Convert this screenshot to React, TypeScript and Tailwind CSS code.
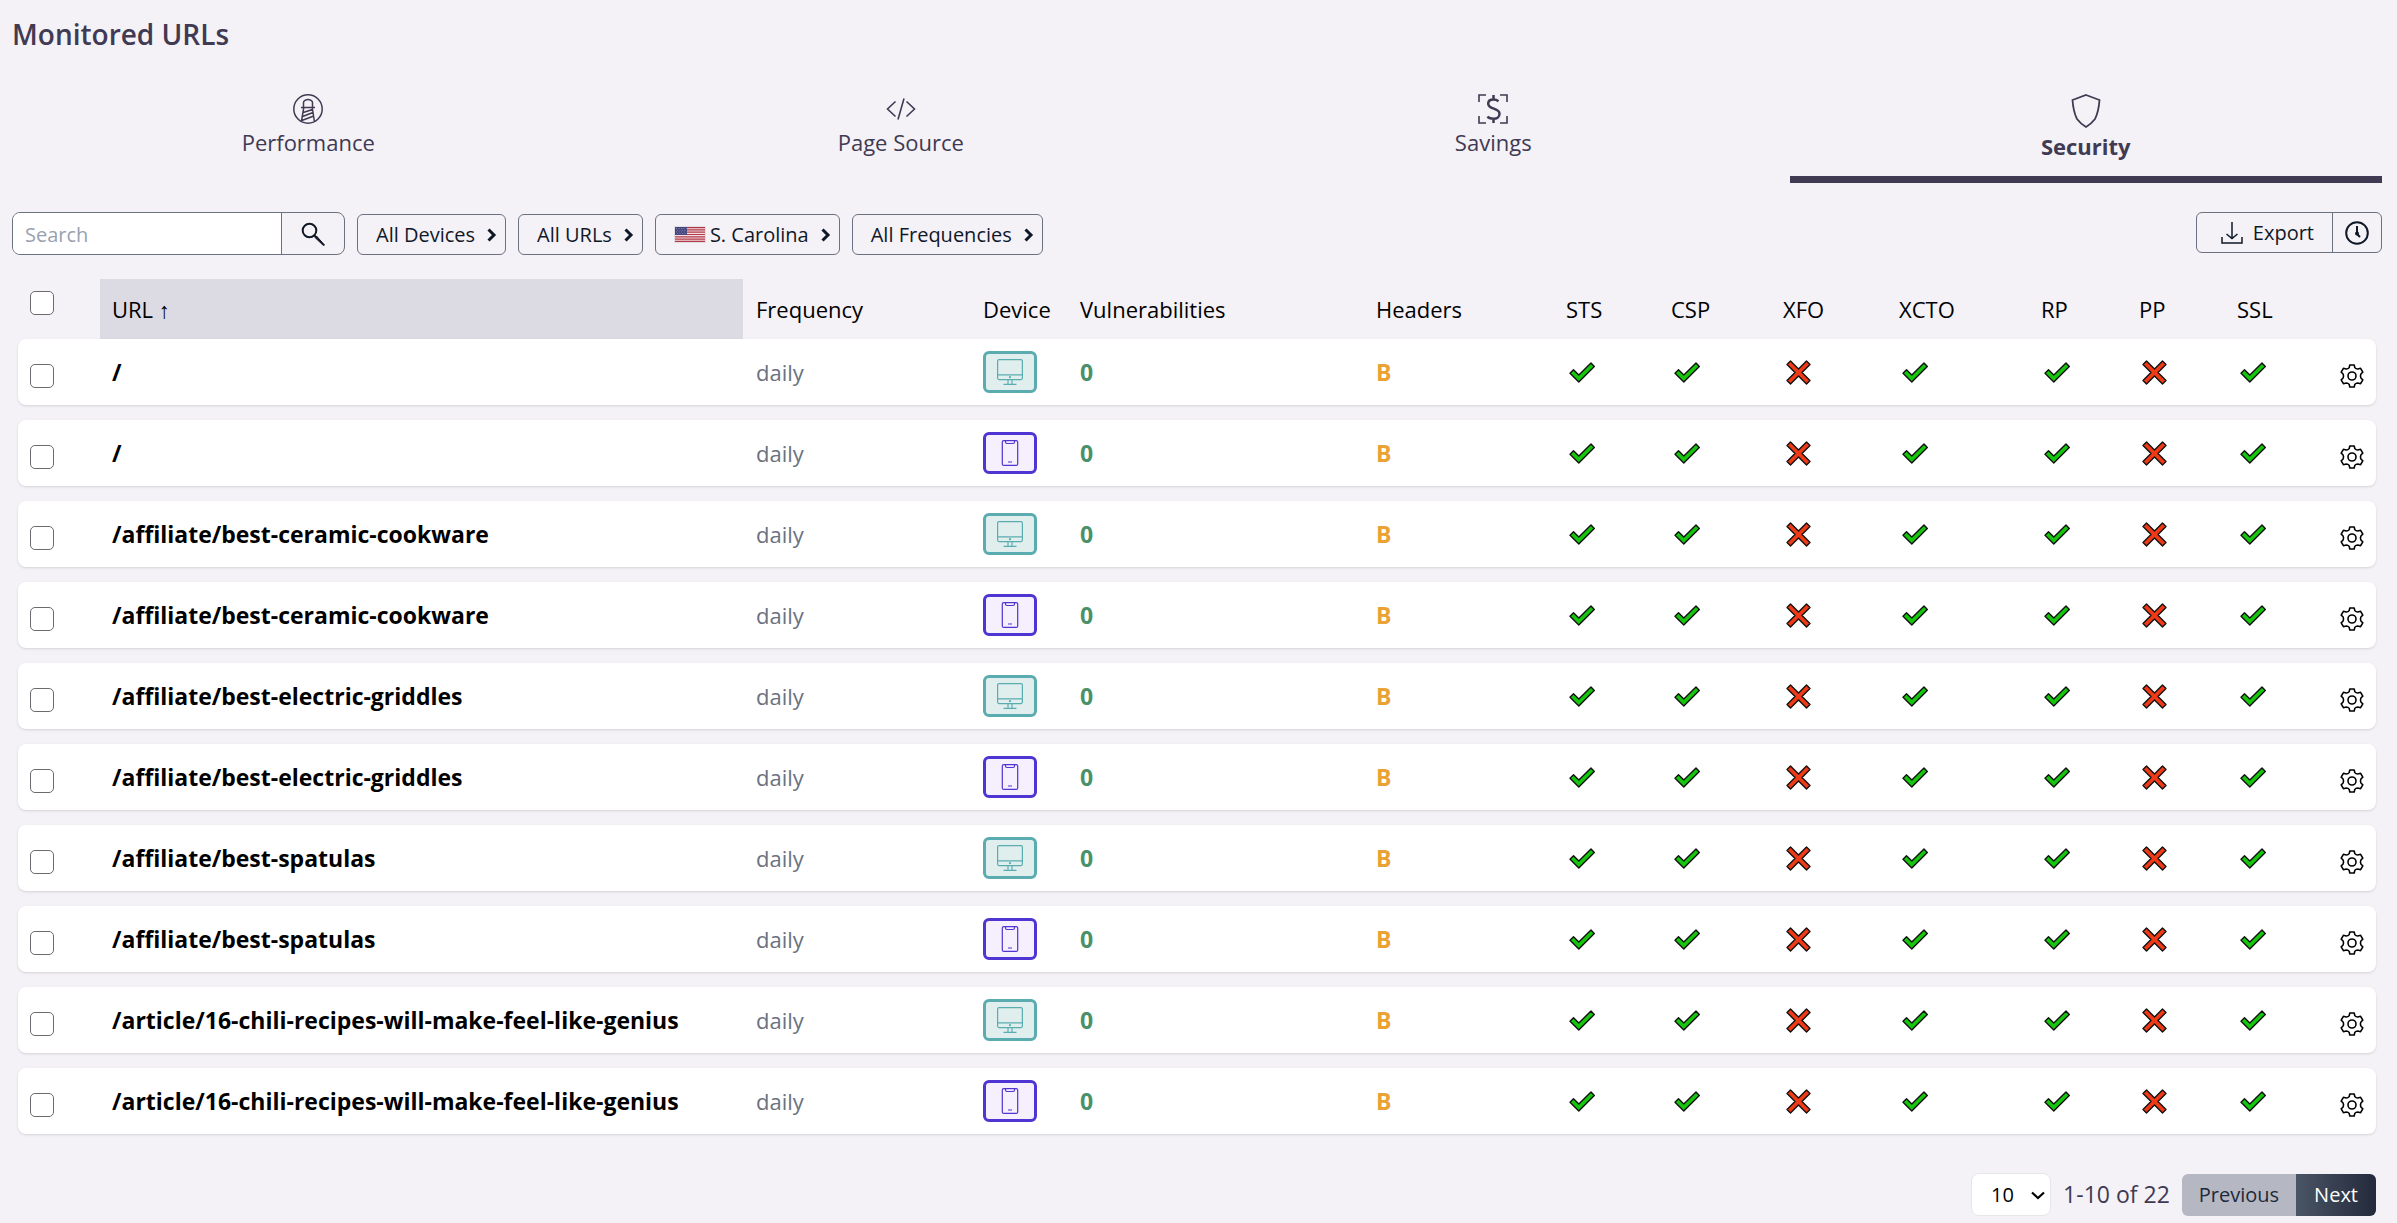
import { ReactNode } from "react";

const rows = [
  { url: "/", device: "desktop" },
  { url: "/", device: "mobile" },
  { url: "/affiliate/best-ceramic-cookware", device: "desktop" },
  { url: "/affiliate/best-ceramic-cookware", device: "mobile" },
  { url: "/affiliate/best-electric-griddles", device: "desktop" },
  { url: "/affiliate/best-electric-griddles", device: "mobile" },
  { url: "/affiliate/best-spatulas", device: "desktop" },
  { url: "/affiliate/best-spatulas", device: "mobile" },
  { url: "/article/16-chili-recipes-will-make-feel-like-genius", device: "desktop" },
  { url: "/article/16-chili-recipes-will-make-feel-like-genius", device: "mobile" },
];

const headers = [
  { name: "STS", pass: true },
  { name: "CSP", pass: true },
  { name: "XFO", pass: false },
  { name: "XCTO", pass: true },
  { name: "RP", pass: true },
  { name: "PP", pass: false },
  { name: "SSL", pass: true },
];

// Shared by the head row and the body rows so the columns line up
const rowGrid =
  "grid grid-cols-[82fr_643fr_227fr_97fr_296fr_190fr_105fr_112fr_116fr_142fr_98fr_98fr_103fr_49fr]";

function LighthouseIcon() {
  return (
    <svg viewBox="0 0 30 30" className="size-[30px]" fill="none" stroke="currentColor" strokeWidth="1.5">
      <circle cx="15" cy="15" r="14.2" />
      <path d="M10.5 13V8.5C10.5 7 13 5.5 15 5.5s4.500 1.500 4.500 3V13M8 13.500h14M10.700 14 8.500 27M19.300 14l2 13M10.200 18.500l9.300-3M9.500 22.500l10.600-4M8.800 26.500l12-4.500" />
    </svg>
  );
}

function CodeIcon() {
  return (
    <svg viewBox="0 0 30 30" className="size-[30px]" fill="none" stroke="currentColor" strokeWidth="1.600">
      <path d="M9.500 7.500 1.500 15l8 7.500M20.500 7.500l8 7.500-8 7.500M18 4.500 12 25.500" />
    </svg>
  );
}

function SavingsIcon() {
  return (
    <svg viewBox="0 0 30 30" className="size-[30px]" fill="none" stroke="currentColor">
      <path strokeWidth="1.600" d="M1 8V1h7M22 1h7v7M29 22v7h-7M8 29H1v-7" />
      <path
        strokeWidth="2.500"
        d="M20.500 7.200C19 6 17.500 5.500 15.500 5.500c-3.200 0-5.300 1.500-5.300 4.200 0 5.800 11.300 4.200 11.300 10 0 3.200-2.500 5.100-6 5.100-2.300 0-4.500-.6-6.200-2M15.500 1v5M15.500 24.500V29"
      />
    </svg>
  );
}

function ShieldIcon() {
  return (
    <svg viewBox="0 0 30 34" className="h-[34px] w-[30px]" fill="none" stroke="currentColor" strokeWidth="1.800">
      <path d="M15 1 28.500 6c-.5 7-1.500 13-4.500 19-2.300 3-5.500 6-9 8-3.500-2-6.700-5-9-8C3 19 2 13 1.500 6L15 1Z" />
    </svg>
  );
}

function SearchIcon() {
  return (
    <svg viewBox="0 0 24 24" className="size-6" fill="none" stroke="currentColor">
      <circle cx="8.500" cy="8.500" r="6.800" strokeWidth="2" />
      <path d="m13 13 2 2" strokeWidth="2" />
      <path d="m14 15.500 1.500-1.500 8 9-.8.800-8.700-8.300Z" fill="currentColor" />
    </svg>
  );
}

function ChevronIcon() {
  return (
    <svg viewBox="0 0 10 14" className="h-3.5 w-2.5" fill="none" stroke="currentColor" strokeWidth="3">
      <path d="m1.500 1.500 5.500 5.500-5.500 5.500" />
    </svg>
  );
}

function FlagIcon() {
  return (
    <svg viewBox="0 0 32 17" className="h-[17px] w-8">
      <path fill="#e0dee2" d="M0 0h32v17H0z" />
      <path fill="#f3dfe2" d="M1 1h30v15H1z" />
      <path
        stroke="#b23a48"
        strokeWidth="1.200"
        d="M1 1.600h30M1 3.900h30M1 6.200h30M1 8.500h30M1 10.800h30M1 13.100h30M1 15.400h30"
      />
      <path fill="#46467f" d="M1 1h12v8H1z" />
      <path stroke="#8f8fb8" strokeWidth=".8" strokeDasharray="1 1.500" d="M2 2.500h10.500M3 4.200h9M2 5.900h10.500M3 7.600h9" />
    </svg>
  );
}

function DownloadIcon() {
  return (
    <svg viewBox="0 0 22 22" className="size-[22px]" fill="none" stroke="currentColor" strokeWidth="1.500">
      <path d="M11 0v16M5.500 12l5.500 4.500 5.500-4.500M1 15v6h20v-6" />
    </svg>
  );
}

function ClockIcon() {
  return (
    <svg viewBox="0 0 24 24" className="size-6" fill="none" stroke="currentColor" strokeWidth="2">
      <circle cx="12" cy="12" r="10.800" />
      <path d="M12 5v8l3 3" />
      <circle cx="12" cy="12.500" r="1" fill="currentColor" />
    </svg>
  );
}

function CheckIcon() {
  return (
    <svg viewBox="0 0 26 21" className="h-[21px] w-[26px]" role="img" aria-label="Pass">
      <path
        fill="#16c60c"
        stroke="#111"
        strokeWidth="1.400"
        strokeLinejoin="round"
        d="M1 11.300 4.500 7.800 9.800 13 22 1l3.300 3.500L9.800 20 1 11.300Z"
      />
    </svg>
  );
}

function CrossIcon() {
  return (
    <svg viewBox="0 0 25 25" className="size-[25px]" role="img" aria-label="Fail">
      <path
        fill="#f03a17"
        stroke="#111"
        strokeWidth="1.400"
        strokeLinejoin="round"
        d="M4.500 1l8 8 8-8L24 4.500l-8 8 8 8-3.500 3.500-8-8-8 8L1 20.500l8-8-8-8L4.500 1Z"
      />
    </svg>
  );
}

function GearIcon() {
  return (
    <svg viewBox="0 0 24 24" className="size-6" fill="none" stroke="currentColor" strokeWidth="1.600">
      <circle cx="12" cy="12" r="4" />
      <path
        strokeLinejoin="round"
        d="M9.800 1h4.400l.6 2.600Q15.800 5 17.800 5l2.800-.7 2.200 3.900-1.900 1.800q-.9 2 0 4l1.900 1.800-2.200 3.900-2.800-.7q-2 0-3 1.400l-.6 2.600H9.800l-.6-2.600Q8.200 19 6.200 19l-2.800.7-2.200-3.900L3.100 14q.9-2 0-4L1.200 8.200l2.200-3.900 2.800.7q2 0 3-1.400L9.800 1Z"
      />
    </svg>
  );
}

function DeviceBadge({ device }: { device: string }) {
  if (device === "desktop") {
    return (
      <span className="flex h-[42px] w-[54px] items-center justify-center rounded-md border-3 border-[#5aacb0] bg-[#e0eeed] text-[#5aacb0]">
        <svg viewBox="0 0 26 26" className="size-[26px]" fill="none" stroke="currentColor" strokeWidth="1.200" role="img" aria-label="Desktop">
          <rect x=".6" y=".6" width="24.800" height="20" rx="1.500" />
          <path d="M.6 15.800h24.800M11 20.600v4.600M15 20.600v4.600M6.500 25.400h13" />
          <circle cx="13" cy="18.200" r=".5" />
        </svg>
      </span>
    );
  }
  return (
    <span className="flex h-[42px] w-[54px] items-center justify-center rounded-md border-3 border-[#4f35d2] bg-[#f5effe] text-[#4f35d2]">
      <svg viewBox="0 0 26 26" className="size-[26px]" fill="none" stroke="currentColor" strokeWidth="1.200" role="img" aria-label="Mobile">
        <rect x="5.300" y=".6" width="15.400" height="24.800" rx="1.500" />
        <path d="M8.500 1v1c0 1 .5 1.500 1.500 1.500h6c1 0 1.500-.5 1.500-1.500V1M11 22h4" />
      </svg>
    </span>
  );
}

function Tab({ icon, label, active = false }: { icon: ReactNode; label: string; active?: boolean }) {
  return (
    <button
      type="button"
      role="tab"
      aria-selected={active}
      className={`flex flex-col items-center border-b-[7px] pb-3 text-[#403a52] ${
        active ? "border-[#403a52] font-bold" : "border-transparent"
      }`}
    >
      {icon}
      <span className="text-[22px] leading-9">{label}</span>
    </button>
  );
}

function FilterButton({ children }: { children: ReactNode }) {
  return (
    <button
      type="button"
      className="flex h-[41px] items-center gap-3 rounded-md border border-gray-500 pr-2 pl-[18px] text-xl text-gray-900"
    >
      {children}
      <ChevronIcon />
    </button>
  );
}

function Checkbox({ label }: { label: string }) {
  return (
    <input
      type="checkbox"
      aria-label={label}
      className="block size-6 appearance-none rounded-[5px] border border-[#6b6b6f] bg-white checked:bg-[#403a52]"
    />
  );
}

export default function App() {
  return (
    <main className="min-h-screen bg-[#f4f1f7] pt-3 pr-[15px] pb-[7px] pl-3 font-['Open_Sans','Noto_Sans',sans-serif] text-black">
      <h1 className="text-[28px] leading-11 font-semibold text-[#403a52]">Monitored URLs</h1>

      <div role="tablist" className="mt-[38px] grid grid-cols-4">
        <Tab icon={<LighthouseIcon />} label="Performance" />
        <Tab icon={<CodeIcon />} label="Page Source" />
        <Tab icon={<SavingsIcon />} label="Savings" />
        <Tab icon={<ShieldIcon />} label="Security" active />
      </div>

      <div className="mt-[29px] flex items-end gap-3">
        <form className="flex h-[43px] w-[333px] overflow-hidden rounded-lg border border-gray-500">
          <input
            type="search"
            aria-label="Search"
            placeholder="Search"
            className="min-w-0 flex-1 bg-white px-3 pt-0.5 text-xl outline-none placeholder:text-gray-400"
          />
          <button
            type="submit"
            aria-label="Submit search"
            className="flex w-[63px] items-center justify-center border-l border-gray-500 text-gray-900"
          >
            <SearchIcon />
          </button>
        </form>
        <FilterButton>All Devices</FilterButton>
        <FilterButton>All URLs</FilterButton>
        <FilterButton>
          <span className="flex items-center gap-1">
            <FlagIcon />
            S. Carolina
          </span>
        </FilterButton>
        <FilterButton>All Frequencies</FilterButton>

        <div className="ml-auto flex h-[41px] self-start rounded-md border border-gray-500 text-xl text-gray-900">
          <button type="button" className="flex items-center gap-2.5 pr-[18px] pl-6">
            <DownloadIcon />
            Export
          </button>
          <button
            type="button"
            aria-label="Schedule export"
            className="flex w-[49px] items-center justify-center border-l border-gray-500"
          >
            <ClockIcon />
          </button>
        </div>
      </div>

      <div className="mt-6 px-1.5">
        <table className="block text-left">
          <thead className="block text-[22px]">
            <tr className={`${rowGrid} h-15 items-stretch`}>
              <th className="flex items-center pb-3 pl-3">
                <Checkbox label="Select all" />
              </th>
              <th className="flex items-center bg-[#dcdae3] px-3 font-normal">
                <button type="button">URL ↑</button>
              </th>
              <th className="flex items-center pl-[13px] font-normal">Frequency</th>
              <th className="flex items-center pl-[13px] font-normal">Device</th>
              <th className="flex items-center pl-[13px] font-normal">Vulnerabilities</th>
              <th className="flex items-center pl-[13px] font-normal">Headers</th>
              {headers.map((h) => (
                <th key={h.name} className="flex items-center pl-[13px] font-normal">
                  {h.name}
                </th>
              ))}
              <th aria-label="Settings" />
            </tr>
          </thead>
          <tbody className="flex flex-col gap-[15px] text-[22px]">
            {rows.map((row, i) => (
              <tr key={i} className={`${rowGrid} h-[66px] items-center rounded-lg bg-white shadow-sm`}>
                <td className="pt-2 pl-3">
                  <Checkbox label={`Select ${row.url} (${row.device})`} />
                </td>
                <td className="px-3 text-[23px] font-bold">{row.url}</td>
                <td className="pl-[13px] text-gray-500">daily</td>
                <td className="pl-[13px]">
                  <DeviceBadge device={row.device} />
                </td>
                <td className="pl-[13px] text-[23px] font-bold text-[#4a9068]">0</td>
                <td className="pl-[13px] text-[23px] font-bold text-[#e9a233]">B</td>
                {headers.map((h) => (
                  <td key={h.name} className="pl-4">
                    {h.pass ? <CheckIcon /> : <CrossIcon />}
                  </td>
                ))}
                <td className="pt-2 pl-[13px]">
                  <button type="button" aria-label="Settings" className="block">
                    <GearIcon />
                  </button>
                </td>
              </tr>
            ))}
          </tbody>
        </table>

        <div className="mt-[39px] flex items-center justify-end gap-3 text-xl">
          <div className="relative">
            <select
              aria-label="Rows per page"
              className="h-[43px] w-20 appearance-none rounded-lg border border-gray-200 bg-white pl-[19px]"
            >
              <option>10</option>
              <option>25</option>
              <option>50</option>
            </select>
            <svg
              viewBox="0 0 14 9"
              className="pointer-events-none absolute top-[18px] right-1.5 h-[9px] w-3.5"
              fill="none"
              stroke="currentColor"
              strokeWidth="2.200"
            >
              <path d="m1 1.500 6 5.500 6-5.500" />
            </svg>
          </div>
          <span className="text-[23px] text-[#403a52]">1-10 of 22</span>
          <div className="flex h-[42px] overflow-hidden rounded-md">
            <button type="button" disabled className="bg-[#b5b8c3] px-[17px] text-gray-800">
              Previous
            </button>
            <button type="button" className="bg-linear-to-r from-gray-600 to-[#242a3b] px-[18px] text-white">
              Next
            </button>
          </div>
        </div>
      </div>
    </main>
  );
}
